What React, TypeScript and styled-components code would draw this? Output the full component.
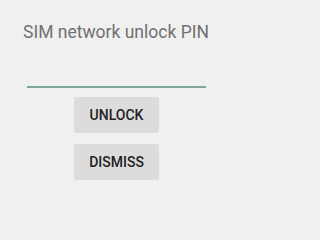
import { createGlobalStyle, styled } from "styled-components";

const GlobalStyle = createGlobalStyle`
  html, body {
    margin: 0;
    padding: 0;
    background: #f0f0f0;
  }
  body {
    font-family: Roboto, "Liberation Sans", sans-serif;
  }
`;

const Screen = styled.div`
  width: 233px;
  height: 208px;
  display: flex;
  flex-direction: column;
  align-items: center;
  background: #f0f0f0;
  overflow: hidden;
`;

const Title = styled.div`
  align-self: flex-start;
  margin: 22px 0 0 23px;
  font-size: 17.5px;
  line-height: 20px;
  color: #707070;
  white-space: nowrap;
`;

const PinField = styled.div`
  width: 179px;
  height: 2px;
  margin-top: 44px;
  background: #7ea89d;
`;

const ButtonColumn = styled.div`
  display: flex;
  flex-direction: column;
  align-items: center;
  gap: 11px;
  margin-top: 9px;
`;

const ActionButton = styled.button`
  width: 85px;
  height: 36px;
  border: none;
  border-radius: 2px;
  background: #dcdcdc;
  color: #222;
  font-family: Roboto, "Liberation Sans", sans-serif;
  font-weight: 500;
  font-size: 14px;
  padding: 0;
`;

export default function App() {
  return (
    <>
      <GlobalStyle />
      <Screen>
        <Title>SIM network unlock PIN</Title>
        <PinField />
        <ButtonColumn>
          <ActionButton>UNLOCK</ActionButton>
          <ActionButton>DISMISS</ActionButton>
        </ButtonColumn>
      </Screen>
    </>
  );
}
